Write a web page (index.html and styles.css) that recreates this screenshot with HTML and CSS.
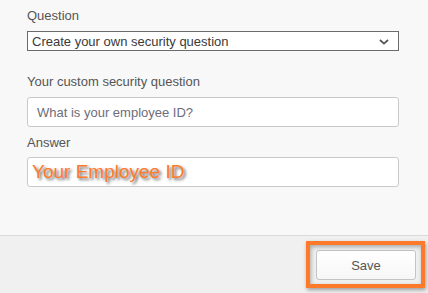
FILE: index.html
```html
<!DOCTYPE html>
<html>
<head>
<meta charset="utf-8">
<link rel="stylesheet" href="styles.css">
</head>
<body>
<div class="page">
  <div class="form">
    <div class="label">Question</div>
    <div class="select">
      <span>Create your own security question</span>
      <svg class="chev" width="10" height="6" viewBox="0 0 10 6"><path d="M1 1 L5 4.6 L9 1" fill="none" stroke="#555" stroke-width="1.8"/></svg>
    </div>
    <div class="label label-gap">Your custom security question</div>
    <div class="input"><span class="placeholder">What is your employee ID?</span></div>
    <div class="label label-answer">Answer</div>
    <div class="input answer">
      <span class="callout">Your Employee ID</span>
    </div>
  </div>
  <div class="footer">
    <div class="btn-wrap">
      <button class="btn">Save</button>
      <div class="highlight"></div>
    </div>
  </div>
</div>
</body>
</html>
```

FILE: styles.css
```css
* { box-sizing: border-box; }
html, body { margin: 0; padding: 0; }
body {
  width: 428px;
  height: 293px;
  background: #f0f0f0;
  font-family: "Liberation Sans", Arial, sans-serif;
  overflow: hidden;
}
.page {
  display: flex;
  flex-direction: column;
  height: 293px;
}
.form {
  background: #f8f8f8;
  padding: 8px 29px 0 27px;
  height: 236px;
  border-bottom: 1px solid #dadada;
}
.label {
  font-size: 13px;
  line-height: 16px;
  color: #555;
  margin-bottom: 7px;
}
.label-gap { margin-top: 23px; }
.label-answer { margin-top: 8px; margin-bottom: 6px; }
.select {
  height: 20px;
  border: 1px solid #6b6b6b;
  background: #fff;
  display: flex;
  align-items: center;
  justify-content: space-between;
  padding: 0 9px 0 4px;
  font-size: 13px;
  color: #3a3a3a;
}
.chev { display: block; margin-top: 1px; }
.input {
  height: 30px;
  border: 1px solid #cacaca;
  border-radius: 3px;
  background: #fff;
  display: flex;
  align-items: center;
  padding: 0 9px;
  font-size: 13px;
}
.placeholder { color: #6d6d7a; }
.answer { position: relative; }
.callout {
  position: absolute;
  left: 4px;
  top: 2px;
  font-size: 19px;
  line-height: 24px;
  color: #ff7a2c;
  -webkit-text-stroke: 3px #fff;
  paint-order: stroke fill;
  text-shadow: 2px 2px 3px rgba(0,0,0,0.6);
  white-space: nowrap;
}
.footer {
  flex: 1;
  background: #f0f0f0;
  display: flex;
  justify-content: flex-end;
  align-items: flex-start;
  padding: 14px 12px 0 0;
}
.btn-wrap { position: relative; }
.btn {
  width: 100px;
  height: 30px;
  border: 1px solid #c4c4c4;
  border-radius: 3px;
  background: linear-gradient(#ffffff, #f7f7f7);
  font-family: "Liberation Sans", Arial, sans-serif;
  font-size: 13px;
  color: #555;
  display: block;
  padding: 0;
}
.highlight {
  position: absolute;
  left: -10px;
  top: -9px;
  right: -9px;
  bottom: -8px;
  border: 4px solid #fd7a2b;
  box-shadow: 1px 2px 4px rgba(0,0,0,0.35), inset 1px 2px 4px rgba(0,0,0,0.3);
}
```
